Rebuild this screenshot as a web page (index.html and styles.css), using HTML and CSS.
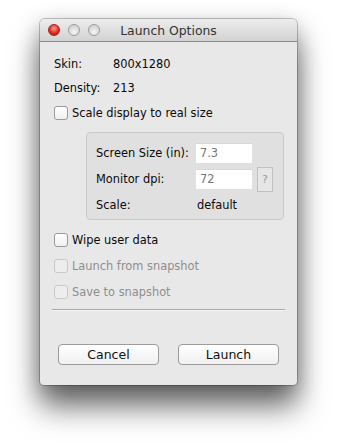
FILE: index.html
```html
<!DOCTYPE html>
<html>
<head>
<meta name="viewport" content="width=device-width, initial-scale=1">
<link rel="stylesheet" href="styles.css">
</head>
<body>

<div class="window">
  <div class="titlebar">
    <div class="lights">
      <span class="light red"></span>
      <span class="light"></span>
      <span class="light"></span>
    </div>
    Launch Options
  </div>

  <div class="content">
    <div class="info"><span class="key">Skin:</span><span>800x1280</span></div>
    <div class="info"><span class="key">Density:</span><span>213</span></div>

    <label class="check"><span class="box"></span>Scale display to real size</label>

    <div class="group">
      <div class="row">
        <span class="lbl">Screen Size (in):</span>
        <span class="field">7.3</span>
      </div>
      <div class="row">
        <span class="lbl">Monitor dpi:</span>
        <span class="field">72</span>
        <span class="help">?</span>
      </div>
      <div class="row">
        <span class="lbl">Scale:</span>
        <span class="val">default</span>
      </div>
    </div>

    <label class="check"><span class="box"></span>Wipe user data</label>
    <label class="check disabled"><span class="box"></span>Launch from snapshot</label>
    <label class="check disabled"><span class="box"></span>Save to snapshot</label>

    <hr class="sep">

    <div class="buttons">
      <button type="button" class="btn">Cancel</button>
      <button type="button" class="btn">Launch</button>
    </div>
  </div>
</div>

</body>
</html>
```

FILE: styles.css
```css
html, body {
  margin: 0;
  background: #ffffff;
}

body {
  min-height: 445px;
  padding-top: 19px;
  box-sizing: border-box;
  font-family: "DejaVu Sans", "Liberation Sans", sans-serif;
  font-size: 11.4px;
  color: #0a0a0a;
}

.window {
  width: 257px;
  height: 366px;
  margin-left: 40px;
  background: #e8e8e8;
  border-radius: 5px 5px 4px 4px;
  box-shadow: 0 0 0 1px rgba(0,0,0,0.22), 0 22px 30px 0 rgba(0,0,0,0.55), 0 6px 22px rgba(0,0,0,0.25);
  overflow: hidden;
}

.titlebar {
  height: 22px;
  line-height: 23px;
  text-align: center;
  font-size: 12.4px;
  color: #333;
  background: linear-gradient(#ededed, #d2d2d2);
  border-bottom: 1px solid #8a8a8a;
  position: relative;
}

/* traffic lights sit over the left of the title bar */
.lights {
  position: absolute;
  left: 8px;
  top: 5px;
  display: flex;
  gap: 8px;
}

.light {
  width: 10px;
  height: 10px;
  border-radius: 50%;
  background: radial-gradient(circle at 50% 70%, #f6f6f6, #c6c6c6);
  border: 1px solid #9c9c9c;
}

.light.red {
  background: radial-gradient(circle at 50% 35%, #ff9a8a, #e0251d 60%, #b8150e);
  border-color: #a1241d;
}

.content {
  padding: 10px 12px 0 14px;
}

.info {
  display: flex;
  height: 24px;
  align-items: center;
}

.key {
  width: 59px;
}

.check {
  display: flex;
  align-items: center;
  height: 26px;
}

.box {
  width: 12px;
  height: 12px;
  border: 1px solid #9a9a9a;
  border-radius: 3px;
  background: linear-gradient(#ffffff, #f0f0f0);
  margin-right: 4px;
}

.check.disabled {
  color: #8f8f8f;
}

.check.disabled .box {
  border-color: #c8c8c8;
  background: #ededed;
}

.group {
  margin: 6px 1px 7px 32px;
  padding: 7px 0 0 9px;
  height: 79px;
  background: #e0e0e0;
  border: 1px solid #cacaca;
  border-radius: 4px;
}

.row {
  display: flex;
  align-items: center;
  height: 26px;
}

.lbl {
  width: 100px;
}

.field {
  width: 52px;
  height: 19px;
  line-height: 19px;
  padding-left: 4px;
  background: #fff;
  color: #777;
  border-top: 1px solid #d8d8d8;
}

.help {
  margin-left: 5px;
  width: 14px;
  height: 23px;
  line-height: 23px;
  text-align: center;
  border: 1px solid #c0c0c0;
  color: #999;
  font-size: 11px;
  background: #e6e6e6;
}

.val {
  margin-left: 1px;
}

.sep {
  border: 0;
  border-top: 1px solid #a8a8a8;
  border-bottom: 1px solid #f6f6f6;
  margin: 4px 0 0 -2px;
}

.buttons {
  display: flex;
  gap: 19px;
  padding: 33px 0 0 4px;
}

.btn {
  width: 101px;
  height: 21px;
  font-family: inherit;
  font-size: 12.5px;
  color: #111;
  background: linear-gradient(#ffffff, #f0f0f0);
  border: 1px solid #9c9c9c;
  border-radius: 4px;
  padding: 0;
}
```
